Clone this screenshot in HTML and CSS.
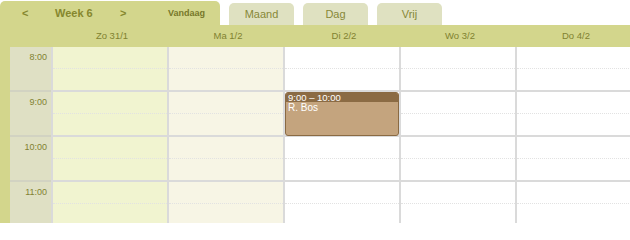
FILE: index.html
```html
<!DOCTYPE html>
<html lang="nl">
<head>
<meta charset="utf-8">
<title>Agenda week 6</title>
<link rel="stylesheet" href="styles.css">
</head>
<body>
<div class="topbar">
  <div class="tab-active">
    <span class="nav-prev">&lt;</span>
    <span class="nav-week">Week 6</span>
    <span class="nav-next">&gt;</span>
    <span class="nav-today">Vandaag</span>
  </div>
  <div class="tab">Maand</div>
  <div class="tab">Dag</div>
  <div class="tab">Vrij</div>
</div>
<div class="cal">
  <div class="head">
    <div class="corner"></div>
    <div class="dh">Zo 31/1</div>
    <div class="dh">Ma 1/2</div>
    <div class="dh">Di 2/2</div>
    <div class="dh">Wo 3/2</div>
    <div class="dh">Do 4/2</div>
  </div>
  <div class="body">
    <div class="timecol">
      <div class="thour">8:00</div>
      <div class="thour">9:00</div>
      <div class="thour">10:00</div>
      <div class="thour">11:00</div>
    </div>
    <div class="day zo">
      <div class="hour"><div class="half"></div></div>
      <div class="hour"><div class="half"></div></div>
      <div class="hour"><div class="half"></div></div>
      <div class="hour"><div class="half"></div></div>
    </div>
    <div class="day ma">
      <div class="hour"><div class="half"></div></div>
      <div class="hour"><div class="half"></div></div>
      <div class="hour"><div class="half"></div></div>
      <div class="hour"><div class="half"></div></div>
    </div>
    <div class="day">
      <div class="hour"><div class="half"></div></div>
      <div class="hour"><div class="half"></div></div>
      <div class="hour"><div class="half"></div></div>
      <div class="hour"><div class="half"></div></div>
      <div class="event">
        <div class="ev-time">9:00 – 10:00</div>
        <div class="ev-name">R. Bos</div>
      </div>
    </div>
    <div class="day">
      <div class="hour"><div class="half"></div></div>
      <div class="hour"><div class="half"></div></div>
      <div class="hour"><div class="half"></div></div>
      <div class="hour"><div class="half"></div></div>
    </div>
    <div class="day">
      <div class="hour"><div class="half"></div></div>
      <div class="hour"><div class="half"></div></div>
      <div class="hour"><div class="half"></div></div>
      <div class="hour"><div class="half"></div></div>
    </div>
  </div>
</div>
</body>
</html>
```
FILE: styles.css
```css
html, body {
  margin: 0;
  padding: 0;
  background: #ffffff;
  width: 630px;
  height: 223px;
  overflow: hidden;
  font-family: "Liberation Sans", Arial, sans-serif;
}

.topbar {
  display: flex;
  align-items: flex-end;
  height: 25px;
}

.tab-active {
  display: flex;
  align-items: center;
  box-sizing: border-box;
  width: 220px;
  height: 24px;
  padding-left: 22px;
  background: #d3d68c;
  border-radius: 5px 5px 0 0;
  color: #86872e;
  font-weight: bold;
}

.nav-prev {
  width: 33px;
  font-size: 11px;
}

.nav-week {
  width: 65px;
  font-size: 11px;
}

.nav-next {
  width: 48px;
  font-size: 11px;
}

.nav-today {
  font-size: 9px;
  color: #77782a;
}

.tab {
  box-sizing: border-box;
  width: 65px;
  height: 22px;
  margin-left: 9px;
  background: #dfe1c1;
  border-radius: 5px 5px 0 0;
  color: #878838;
  font-size: 11px;
  line-height: 22px;
  text-align: center;
}

.cal {
  width: 630px;
  overflow: hidden;
}

.head {
  display: flex;
  height: 22px;
  background: #d3d68c;
}

.corner {
  flex: 0 0 53px;
}

.dh {
  flex: 0 0 114px;
  margin-left: 2px;
  font-size: 9.5px;
  line-height: 22px;
  text-align: center;
  color: #818230;
}

.body {
  display: flex;
  padding-left: 10px;
  background: #d3d68c;
}

.timecol {
  flex: 0 0 41px;
  background: #dfe0c4;
}

.thour {
  box-sizing: border-box;
  height: 45px;
  padding: 5px 4px 0 0;
  border-bottom: 2px solid #d2d3c2;
  text-align: right;
  font-size: 9px;
  line-height: 11px;
  color: #818232;
}

.day {
  position: relative;
  flex: 0 0 114px;
  border-left: 2px solid #dadada;
  background: #ffffff;
}

.day.zo {
  background: #f1f4d0;
}

.day.ma {
  background: #f7f5e5;
}

.hour {
  box-sizing: border-box;
  height: 45px;
  border-bottom: 2px solid #dadada;
}

.half {
  height: 21px;
  border-bottom: 1px dotted #e2e2e2;
}

.event {
  position: absolute;
  top: 45px;
  left: 0;
  width: 114px;
  height: 44px;
  box-sizing: border-box;
  border: 1px solid #8a6a43;
  border-radius: 3px;
  background: #c4a47e;
  overflow: hidden;
  color: #ffffff;
}

.ev-time {
  height: 9px;
  padding-left: 2px;
  background: #8b6b44;
  font-size: 9.5px;
  line-height: 9px;
}

.ev-name {
  padding-left: 2px;
  font-size: 10px;
  line-height: 12px;
}
```
